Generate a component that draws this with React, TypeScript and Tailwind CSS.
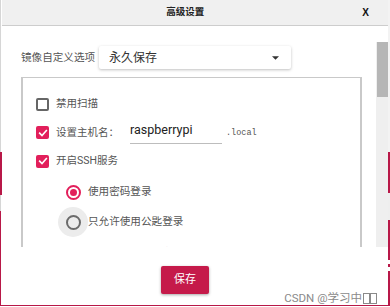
import { useState } from "react";

const FONT = "font-['Roboto','Noto_Sans_CJK_SC',sans-serif]";

function CheckBox({ checked }: { checked: boolean }) {
    if (checked) {
        return (
            <span className="flex w-[13px] h-[13px] items-center justify-center rounded-[2px] bg-[#e21f5b]">
                <svg viewBox="0 0 12 12" className="w-[10px] h-[10px]" fill="none">
                    <path d="M2 6.2 4.8 9 10 3.2" stroke="white" strokeWidth="1.9" strokeLinecap="square" />
                </svg>
            </span>
        );
    }
    return <span className="block w-[13px] h-[13px] rounded-[2px] border-2 border-[#666]" />;
}

function Radio({ checked, hover }: { checked: boolean; hover?: boolean }) {
    return (
        <span className={`flex w-[30px] h-[30px] items-center justify-center rounded-full ${hover ? 'bg-[#ececec]' : ''}`}>
            <span className={`flex w-[15px] h-[15px] items-center justify-center rounded-full border-2 ${checked ? 'border-[#e21f5b]' : 'border-[#6b6b6b]'}`}>
                {checked && <span className="block w-[7px] h-[7px] rounded-full bg-[#e21f5b]" />}
            </span>
        </span>
    );
}

function LeftEdge() {
    return (
        <div className="flex flex-col w-[2px] shrink-0">
            <div className="h-[152px] border-l border-[#d6d6d6]" />
            <div className="h-[43px] bg-[#b81848]" />
            <div className="h-[16px] border-l border-[#d6d6d6]" />
            <div className="flex-1 border-l border-[#b81848]" />
        </div>
    );
}

function RightEdge() {
    return (
        <div className="flex flex-col w-[2px] shrink-0">
            <div className="h-[152px] bg-[#f3f3f3]" />
            <div className="h-[41px] bg-[#b81848]" />
            <div className="h-[27px] bg-[#eeeeee]" />
            <div className="h-[40px] bg-[#b81848]" />
            <div className="h-[4px] bg-white" />
            <div className="h-[3px] bg-[#b81848]" />
            <div className="h-[4px] bg-white" />
            <div className="flex-1 bg-[#b81848]" />
        </div>
    );
}

export default function App() {
    const [hostname, setHostname] = useState<string>('raspberrypi')
    const [scan, setScan] = useState<boolean>(false)

    return (
        <div className={`relative w-[390px] h-[307px] overflow-hidden bg-white flex flex-col ${FONT}`}>
            <div className="flex h-[305px]">
                <LeftEdge />
                <div className="flex-1 flex flex-col min-w-0">
                    {/* header */}
                    <div className="h-[26px] shrink-0 flex items-center bg-[#f0f0f0] border-b border-[#cdcdcd]">
                        <div className="flex-1 text-center text-[9.5px] font-bold text-[#222] pl-[6px]">高级设置</div>
                        <div className="pr-[19px] text-[10px] font-bold text-[#111] font-['Liberation_Sans',sans-serif]">X</div>
                    </div>

                    {/* body */}
                    <div className="flex h-[221px] shrink-0">
                        <div className="flex-1 overflow-hidden pt-[20px] pl-[19px]">
                            <div className="flex items-center h-[23px]">
                                <span className="text-[10.6px] text-[#555] w-[78px]">镜像自定义选项</span>
                                <div className="flex items-center justify-between w-[192px] h-[23px] pl-[10px] pr-[12px] bg-white rounded-[2px] shadow-[0_1px_3px_rgba(0,0,0,0.25)]">
                                    <span className="text-[12px] text-[#333]">永久保存</span>
                                    <svg viewBox="0 0 8 4" className="w-[7px] h-[4px]"><path d="M0 0h8L4 4z" fill="#333" /></svg>
                                </div>
                            </div>

                            <div className="mt-[8px] w-[341px] h-[260px] border border-x-2 border-[#c9c9c9] pt-[12px]">
                                <div className="flex items-center h-[28px] pl-[13px] gap-[7px]" onClick={() => setScan(!scan)}>
                                    <CheckBox checked={scan} />
                                    <span className="text-[10.5px] text-[#555]">禁用扫描</span>
                                </div>
                                <div className="flex items-center h-[29px] pl-[13px] gap-[7px]">
                                    <CheckBox checked={true} />
                                    <span className="text-[10.5px] text-[#555] w-[67px]">设置主机名：</span>
                                    <div className="flex flex-col w-[92px] h-[22px] border-b border-[#bdbdbd]">
                                        <input value={hostname} onChange={(e) => setHostname(e.target.value)} className="w-full h-[18px] outline-none text-[12.5px] text-[#222] bg-transparent" />
                                    </div>
                                    <span className="text-[8.5px] text-[#555] font-['Liberation_Mono',monospace] pt-[2px] ml-[-3px]">.local</span>
                                </div>
                                <div className="flex items-center h-[28px] pl-[13px] gap-[7px]">
                                    <CheckBox checked={true} />
                                    <span className="text-[10.5px] text-[#555]">开启SSH服务</span>
                                </div>
                                <div className="flex items-center h-[30px] pl-[35px] mt-[2px]">
                                    <Radio checked={true} />
                                    <span className="text-[10.6px] text-[#555]">使用密码登录</span>
                                </div>
                                <div className="flex items-center h-[30px] pl-[35px]">
                                    <Radio checked={false} hover={true} />
                                    <span className="text-[10.6px] text-[#555]">只允许使用公匙登录</span>
                                </div>
                                <div className="pl-[69px] mt-[9px] text-[10px] text-[#999] leading-[14px]">设置（用户名和密码）</div>
                            </div>
                        </div>
                        {/* scrollbar */}
                        <div className="w-[12px] shrink-0 flex flex-col pt-[16px]">
                            <div className="flex-1 bg-[#efefef]">
                                <div className="h-[55px] ml-[1px] bg-[#b6b6b6]" />
                            </div>
                        </div>
                    </div>

                    {/* footer */}
                    <div className="flex-1 pt-[19px] pl-[159px]">
                        <button type="button" className="w-[48px] h-[28px] rounded-[2px] bg-[#c51a4a] text-white text-[11px] shadow-[0_1px_3px_rgba(0,0,0,0.35)]">保存</button>
                    </div>
                </div>
                <RightEdge />
            </div>
            <div className="h-px bg-[#b81848]" />
            <div className="absolute right-[13px] bottom-[2px] flex items-center text-[11.5px] text-[#8a8a8a] leading-[14px]">
                <span>CSDN @学习中</span>
                <span className="inline-block w-[7px] h-[11px] border border-[#8a8a8a] ml-[1px]" />
                <span className="inline-block w-[7px] h-[11px] border border-[#8a8a8a]" />
            </div>
        </div>
    )
}
